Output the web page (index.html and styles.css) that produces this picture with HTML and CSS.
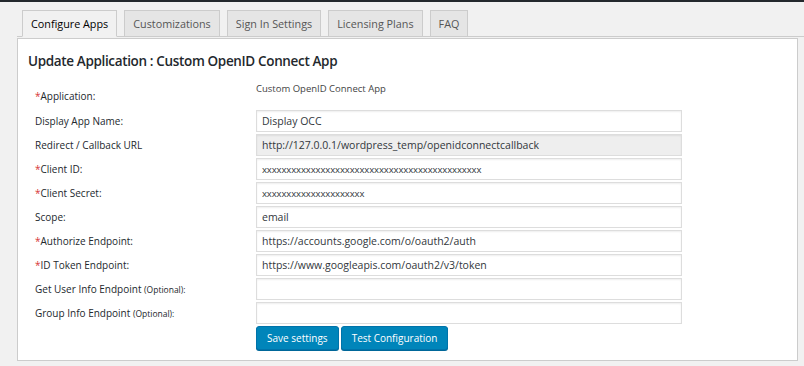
FILE: index.html
```html
<!DOCTYPE html>
<html lang="en">
  <head>
    <meta charset="UTF-8" />
    <meta name="viewport" content="width=device-width, initial-scale=1.0" />
    <title>Configure Apps</title>

    <link rel="stylesheet" href="styles.css">
  </head>
  <body>
    <div class="admin-bar"></div>
    <div class="wrap">
      <ul class="tabs">
        <li class="tab active">Configure Apps</li>
        <li class="tab">Customizations</li>
        <li class="tab">Sign In Settings</li>
        <li class="tab">Licensing Plans</li>
        <li class="tab">FAQ</li>
      </ul>

      <div class="panel">
        <h3>Update Application : Custom OpenID Connect App</h3>
        <form class="app-form">
          <div class="row app-row">
            <label><span class="req">*</span>Application:</label>
            <div class="app-name">Custom OpenID Connect App</div>
          </div>
          <div class="row">
            <label>Display App Name:</label>
            <input type="text" value="Display OCC" />
          </div>
          <div class="row">
            <label>Redirect / Callback URL</label>
            <input type="text" class="readonly" value="http://127.0.0.1/wordpress_temp/openidconnectcallback" readonly />
          </div>
          <div class="row">
            <label><span class="req">*</span>Client ID:</label>
            <input type="text" class="secret" value="xxxxxxxxxxxxxxxxxxxxxxxxxxxxxxxxxxxxxxxxxxxxx" />
          </div>
          <div class="row">
            <label><span class="req">*</span>Client Secret:</label>
            <input type="text" class="secret" value="xxxxxxxxxxxxxxxxxxxxx" />
          </div>
          <div class="row">
            <label>Scope:</label>
            <input type="text" value="email" />
          </div>
          <div class="row">
            <label><span class="req">*</span>Authorize Endpoint:</label>
            <input type="text" value="https://accounts.google.com/o/oauth2/auth" />
          </div>
          <div class="row">
            <label><span class="req">*</span>ID Token Endpoint:</label>
            <input type="text" value="https://www.googleapis.com/oauth2/v3/token" />
          </div>
          <div class="row">
            <label>Get User Info Endpoint <small>(Optional):</small></label>
            <input type="text" value="" />
          </div>
          <div class="row">
            <label>Group Info Endpoint <small>(Optional):</small></label>
            <input type="text" value="" />
          </div>
          <div class="row buttons">
            <span></span>
            <div class="btn-group">
              <button type="submit" class="btn">Save settings</button>
              <button type="button" class="btn">Test Configuration</button>
            </div>
          </div>
        </form>
      </div>
    </div>
  </body>
</html>
```

FILE: styles.css
```css
* {
  box-sizing: border-box;
}

body {
  margin: 0;
  background: #f1f1f1;
  font-family: "Open Sans", Arial, sans-serif;
  color: #23282d;
}

.admin-bar {
  height: 2px;
  background: #23282d;
}

.wrap {
  padding: 8px 6px 0 17px;
}

.tabs {
  display: flex;
  gap: 7px;
  margin: 0 -6px 0 0;
  padding: 0 0 0 5px;
  list-style: none;
  border-bottom: 1px solid #ccc;
}

.tab {
  margin-bottom: -1px;
  padding: 0 8px;
  height: 27px;
  line-height: 25px;
  font-size: 10.8px;
  color: #555;
  background: #e5e5e5;
  border: 1px solid #ccc;
}

.tab.active {
  color: #000;
  background: #f1f1f1;
  border-bottom-color: #f1f1f1;
}

.panel {
  margin-top: 1px;
  background: #fff;
  border: 1px solid #ccc;
  padding: 13px 10px 8px;
  width: 781px;
}

h3 {
  margin: 0 0 13px;
  font-size: 13.5px;
  line-height: 18px;
  font-weight: 600;
  letter-spacing: -0.35px;
  color: #23282d;
}

.row {
  display: grid;
  grid-template-columns: 221px 426px;
  align-items: center;
  padding-left: 7px;
  margin-bottom: 2px;
}

.row label {
  font-size: 10px;
  color: #23282d;
}

.row label small {
  font-size: 8.5px;
}

.req {
  color: #d63638;
}

.app-row {
  height: 25px;
  align-items: start;
}

.app-row label {
  padding-top: 6px;
  line-height: 14px;
}

.app-name {
  font-size: 9.5px;
  line-height: 12px;
  color: #444;
}

input {
  height: 22px;
  width: 426px;
  padding: 0 5px;
  font-family: inherit;
  font-size: 10.5px;
  color: #32373c;
  border: 1px solid #ddd;
  box-shadow: inset 0 1px 2px rgba(0, 0, 0, 0.07);
  background: #fff;
}

input.readonly {
  background: #eee;
}

input.secret {
  font-size: 9.5px;
  letter-spacing: -0.1px;
}

.btn-group {
  display: flex;
  gap: 2px;
}

.btn {
  height: 24px;
  padding: 0 10px;
  font-family: inherit;
  font-size: 10px;
  color: #fff;
  background: #0085ba;
  border: 1px solid #0073aa;
  border-radius: 3px;
  box-shadow: 0 1px 0 #006799;
  cursor: pointer;
}
```
